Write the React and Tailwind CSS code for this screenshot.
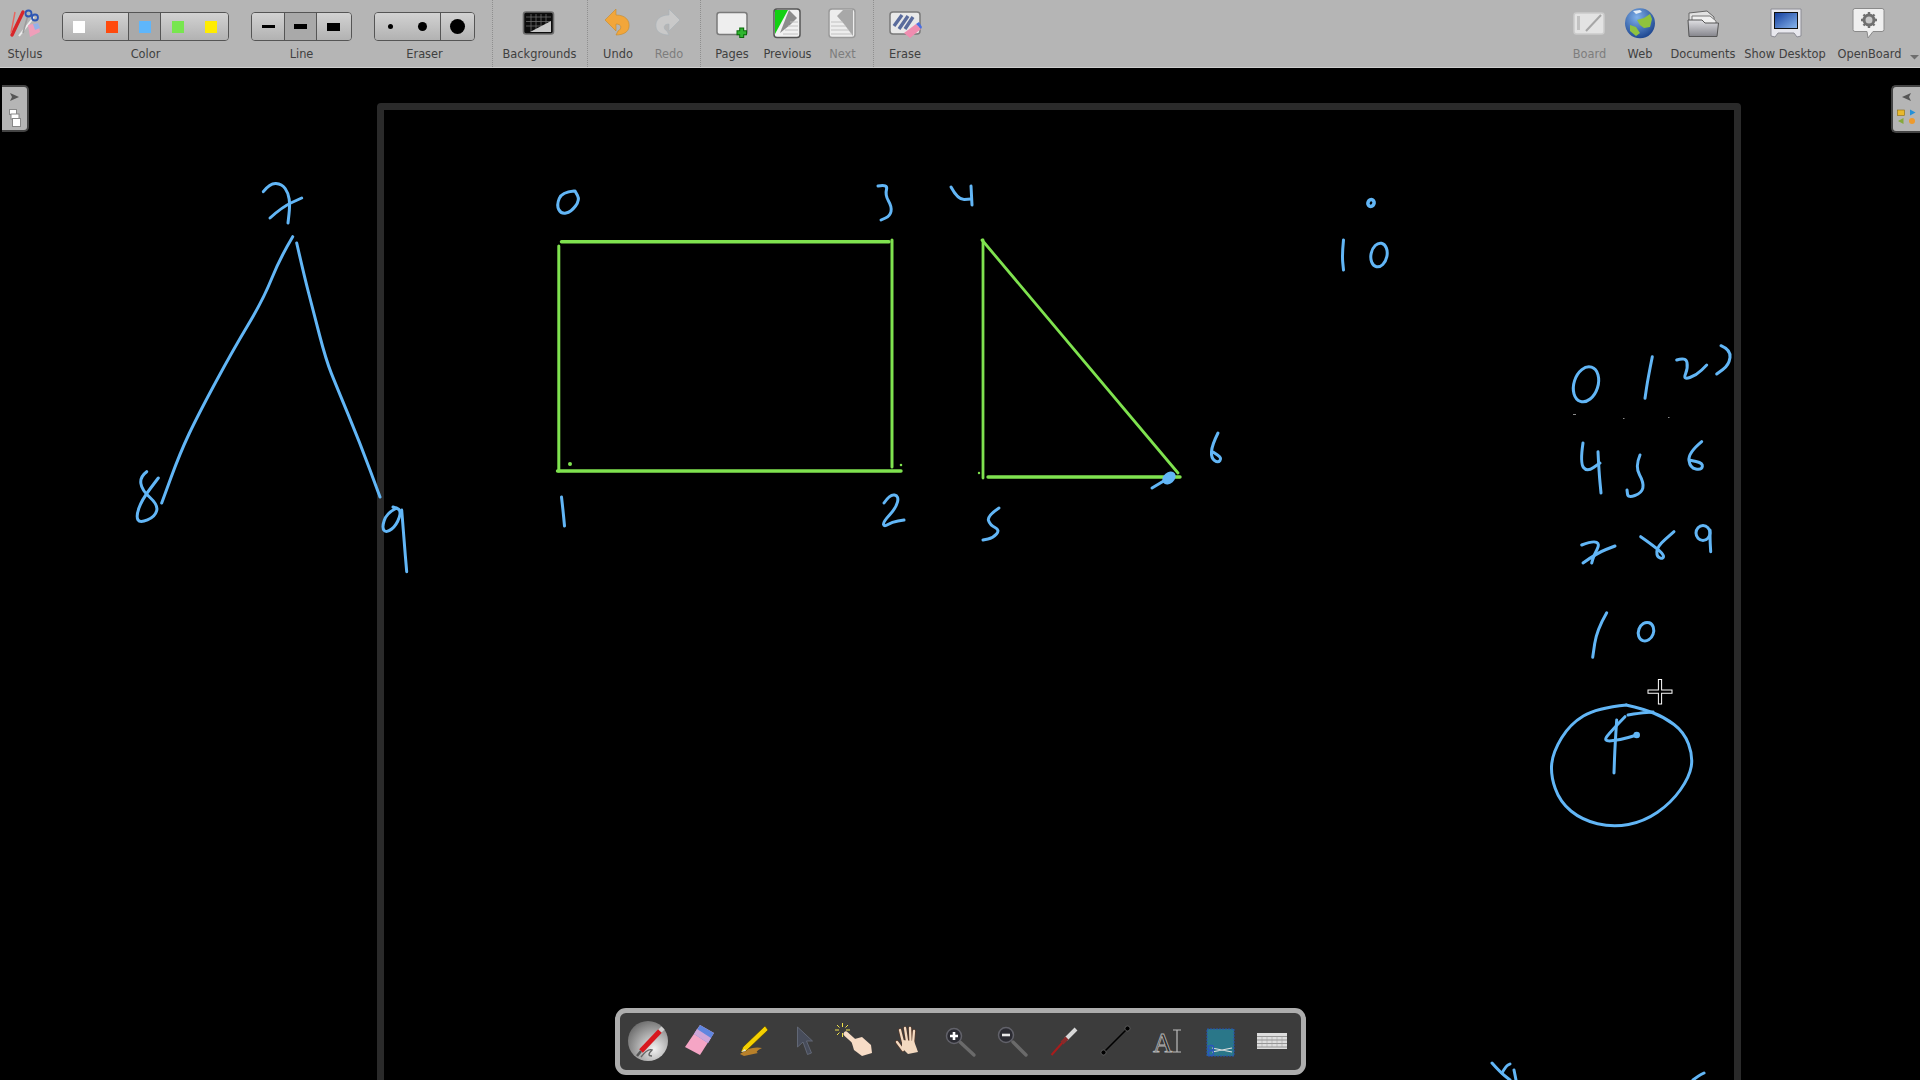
import React from "react";

// freehand ink, page coordinates
const BLUE = "#62b6f6";
const GREEN = "#7fe24f";

const smooth = (pts) => {
  let d = `M${pts[0][0]} ${pts[0][1]}`;
  for (let i = 1; i < pts.length - 1; i++) {
    const mx = (pts[i][0] + pts[i + 1][0]) / 2;
    const my = (pts[i][1] + pts[i + 1][1]) / 2;
    d += ` Q${pts[i][0]} ${pts[i][1]} ${mx} ${my}`;
  }
  const last = pts[pts.length - 1];
  return d + ` L${last[0]} ${last[1]}`;
};

const blueStrokes = [
  // left figure
  [[292.7, 236.7], [280, 258], [263, 300], [233, 350], [198, 415], [180, 453], [161.7, 503]],
  [[296.7, 243], [304, 275], [313, 310], [326, 360], [336.7, 386.7], [360, 443], [380, 497]],
  [[263.3, 191.7], [270, 183], [282, 184], [288.3, 193], [290, 205], [288, 223]],
  [[270, 218], [282, 207], [301.7, 198]],
  [[146.7, 471.7], [140, 476.7], [141.7, 490], [158.3, 505], [155, 516.7], [140, 523], [136, 516.7], [141.7, 500], [158.3, 478]],
  [[396.7, 508], [386.7, 513], [381.7, 528], [386.7, 533], [396.7, 525], [401.7, 510], [393, 507]],
  [[401.7, 510], [404, 540], [406.7, 571.7]],
  // square labels
  [[574, 191], [562, 192], [556.5, 205], [561, 214], [571, 212], [580, 200], [575, 191]],
  [[878, 186], [888, 184], [885, 195], [892, 207], [890, 216], [881, 220]],
  [[951, 187], [958, 200], [971, 199]],
  [[971, 186], [972, 205]],
  [[561.5, 497], [563, 510], [564.5, 526]],
  [[884, 503], [890, 494], [899, 496], [896, 508], [883, 522], [884, 527], [892, 522], [904, 520]],
  [[999, 508], [987, 516], [990, 525], [1000, 530], [993, 538], [983, 540]],
  [[1218, 433], [1212, 445], [1211, 458], [1218, 463], [1222, 458], [1213, 452]],
  [[1152, 488], [1162, 482], [1172, 476]],
  // top right 10
  [[1343.5, 240], [1342, 255], [1343.5, 270]],
  // right column
  [[1652.3, 356.7], [1648, 378], [1645, 398.3]],
  [[1676.7, 360], [1686, 357], [1688, 368], [1683, 380], [1696.7, 375], [1706.7, 365]],
  [[1721, 345.7], [1731, 350], [1729, 365], [1716.7, 374]],
  [[1583, 443], [1580, 463], [1587, 472], [1600, 463]],
  [[1598, 451.7], [1599, 472], [1601, 493]],
  [[1640, 455], [1635, 466.7], [1644, 483], [1641.7, 493], [1628, 498], [1627, 490]],
  [[1701.7, 441.7], [1688, 453], [1690, 468], [1701.7, 470], [1703, 463], [1689, 460]],
  [[1581.7, 545], [1593, 540.7], [1600, 544], [1594, 555], [1591.7, 563]],
  [[1583, 563], [1597, 553], [1615, 546]],
  [[1640.7, 536.7], [1655, 546.7], [1664, 555], [1663, 559], [1656.7, 556.7], [1657, 546.7], [1674, 531.7]],
  [[1710, 530], [1710, 540], [1710.7, 551.7]],
  [[1606.7, 612.7], [1596.7, 630], [1592.7, 657.3]],
  // circled 4
  [[1626.7, 705], [1596.7, 708], [1570, 724], [1553, 752], [1550.5, 775], [1560, 802], [1582, 820], [1613, 827.5], [1644, 821.5], [1671, 803], [1689.5, 777], [1693, 756], [1684, 732], [1664, 717], [1643, 709], [1626, 705]],
  [[1625, 716.7], [1612, 730], [1602.7, 741.7], [1620, 740], [1636.7, 735]],
  [[1616.7, 720], [1615, 745], [1614, 773]],
  [[1628, 715], [1640, 713], [1653, 712]],
  // clipped at the bottom
  [[1492, 1063], [1500, 1072], [1510, 1080]],
  [[1502, 1073], [1506, 1066], [1510, 1064]],
  [[1514, 1070], [1516, 1080]],
  [[1693, 1080], [1698, 1076], [1704, 1073]],
];

function Drawing() {
  return (
    <svg className="absolute inset-0 w-full h-full" viewBox="0 68 1920 1012">
      <g stroke={GREEN} fill="none" strokeLinecap="round">
        <path d="M561.5 241.7H889" strokeWidth="3.4" />
        <path d="M558.8 246V471M892 240V467" strokeWidth="3" />
        <path d="M557.5 471H901" strokeWidth="3.4" />
        <path d="M983 240V478" strokeWidth="2.8" />
        <path d="M982 240L1178 473" strokeWidth="2.8" />
        <path d="M988 477H1180" strokeWidth="3.4" />
        <circle cx="570" cy="464" r="1" strokeWidth="2" />
        <circle cx="901" cy="465" r="0.6" strokeWidth="1.4" />
        <circle cx="979" cy="473" r="0.5" strokeWidth="1.4" />
      </g>
      <g stroke={BLUE} fill="none" strokeWidth="3" strokeLinecap="round" strokeLinejoin="round">
        {blueStrokes.map((pts, i) => (
          <path key={i} d={smooth(pts)} />
        ))}
        <ellipse cx="1586" cy="384.3" rx="12" ry="18" transform="rotate(18 1586 384.3)" />
        <ellipse cx="1371" cy="203" rx="3" ry="3.5" strokeWidth="3.6" transform="rotate(25 1371 203)" />
        <ellipse cx="1379" cy="255" rx="8" ry="12" transform="rotate(12 1379 255)" />
        <ellipse cx="1703" cy="533" rx="7" ry="7.5" />
        <ellipse cx="1646" cy="631.7" rx="7.5" ry="9.5" transform="rotate(20 1646 631.7)" />
        <ellipse cx="1169" cy="478" rx="6" ry="4" fill={BLUE} transform="rotate(-40 1169 478)" />
        <circle cx="1636.7" cy="735" r="1.8" fill={BLUE} />
      </g>
      <g fill="#8a8a8a">
        <rect x="1573" y="414" width="3" height="1" />
        <rect x="1623" y="418" width="1.5" height="1" />
        <rect x="1668" y="417" width="1.5" height="1" />
      </g>
      {/* cross cursor */}
      <path d="M1660 679V704.5M1647.5 691.7H1672.5" stroke="#fff" strokeWidth="4.2" />
      <path d="M1660 680V703.5M1648.5 691.7H1671.5" stroke="#000" strokeWidth="2.2" />
    </svg>
  );
}

function Tool({ x, w, label, disabled, children }) {
  return (
    <div className="flex flex-col items-center shrink-0" style={{ width: w }}>
      <svg width={w} height="44" viewBox={`${x} 0 ${w} 44`} className="block">
        {children}
      </svg>
      <span className={`text-[11.4px] leading-[20px] whitespace-nowrap ${disabled ? "text-[#7d7d7d]" : "text-[#404040]"}`}>
        {label}
      </span>
    </div>
  );
}

function SegGroup({ label, width, children }) {
  return (
    <div className="flex flex-col items-center shrink-0" style={{ width }}>
      <div className="mt-[12px] w-full h-[29px] mb-[3px] flex border border-[#555555] rounded-[4px] overflow-hidden divide-x divide-[#555555]">
        {children}
      </div>
      <span className="text-[11.4px] leading-[20px] text-[#404040]">{label}</span>
    </div>
  );
}

function Seg({ w, active, children }) {
  return (
    <div
      className={`h-full flex items-center justify-around ${active ? "bg-[#a9a9a9]" : "bg-gradient-to-b from-[#d2d2d2] to-[#b2b2b2]"}`}
      style={{ width: w }}
    >
      {children}
    </div>
  );
}

const Swatch = ({ color }) => <div className="w-3 h-3" style={{ background: color }} />;
const Bar = ({ h }) => <div className="w-[13px] bg-black" style={{ height: h }} />;
const Dot = ({ d }) => <div className="rounded-full bg-black" style={{ width: d, height: d }} />;
const Sep = () => <div className="w-0 h-full border-l border-dotted border-[#8f8f8f] shrink-0" />;

function Toolbar() {
  return (
    <div className="h-[68px] shrink-0 flex bg-[#b5b5b5] border-b border-[#cfcfcf]">
      <Tool x={0} w={50} label="Stylus">
        <path d="M23 12L12 35" stroke="#d8262a" strokeWidth="3.4" strokeLinecap="round" />
        <path d="M15 12L11 33" stroke="#e8655f" strokeWidth="1.4" />
        <path d="M34 17L19 36" stroke="#ececec" strokeWidth="2" />
        <path d="M28 15L23 33" stroke="#9c9c9c" strokeWidth="1.6" />
        <circle cx="28.5" cy="13.5" r="3" fill="none" stroke="#2c56b4" strokeWidth="1.8" />
        <circle cx="35" cy="17.5" r="3" fill="none" stroke="#2c56b4" strokeWidth="1.8" />
        <path d="M28 25L38 23L40 32L30 37Z" fill="#ef9fba" />
        <path d="M33 24L38 23L40 28L35 30Z" fill="#94b2e8" />
      </Tool>
      <div className="w-[12px] shrink-0" />
      <SegGroup label="Color" width={167}>
        <Seg w={67}>
          <Swatch color="#ffffff" />
          <Swatch color="#ff4a0d" />
        </Seg>
        <Seg w={32} active>
          <Swatch color="#5fb6fb" />
        </Seg>
        <Seg w={68}>
          <Swatch color="#78e64f" />
          <Swatch color="#ffec00" />
        </Seg>
      </SegGroup>
      <div className="w-[22px] shrink-0" />
      <SegGroup label="Line" width={101}>
        <Seg w={34}>
          <Bar h={3} />
        </Seg>
        <Seg w={32} active>
          <Bar h={5} />
        </Seg>
        <Seg w={35}>
          <Bar h={8} />
        </Seg>
      </SegGroup>
      <div className="w-[22px] shrink-0" />
      <SegGroup label="Eraser" width={101}>
        <Seg w={67}>
          <Dot d={5} />
          <Dot d={9} />
        </Seg>
        <Seg w={34}>
          <Dot d={15} />
        </Seg>
      </SegGroup>
      <div className="w-[17px] shrink-0" />
      <Sep />
      <Tool x={493} w={93} label="Backgrounds">
        <rect x="523.5" y="12" width="30" height="22" rx="2.5" fill="#0c0c0c" stroke="#6e6e6e" strokeWidth="1.6" />
        <path d="M526 17H551M526 21.5H551M526 26H551M531 14V32M536 14V32M541 14V32M546 14V32" stroke="#6a6a6a" strokeWidth="0.8" />
        <path d="M530 32L551 21V32Z" fill="#c9c9c9" />
      </Tool>
      <div className="w-[1px] shrink-0" />
      <Sep />
      <div className="w-[5px] shrink-0" />
      <Tool x={593} w={50} label="Undo">
        <path d="M605 20L616 9V15C625 15 630 20 629 27C628.5 32 623 35 616 35L618 31C622 29 622 24 616 24V31Z" fill="#f2a63a" stroke="#c58a2c" strokeWidth="0.6" />
      </Tool>
      <Tool x={643} w={52} label="Redo" disabled>
        <path d="M680 20L669 9V15C660 15 655 20 656 27C656.5 32 662 35 669 35L667 31C663 29 663 24 669 24V31Z" fill="#c9c9c9" stroke="#a7b1b8" strokeWidth="0.6" />
      </Tool>
      <div className="w-[5px] shrink-0" />
      <Sep />
      <div className="w-[4px] shrink-0" />
      <Tool x={705} w={54} label="Pages">
        <rect x="717" y="12.5" width="30" height="22" rx="2.5" fill="#eeeeee" stroke="#7a7a7a" strokeWidth="1.5" />
        <path d="M741.7 27.5V38M736.5 32.7H747" stroke="#0a6a0a" strokeWidth="5" />
        <path d="M741.7 28.5V37M737.5 32.7H746" stroke="#2fb52f" strokeWidth="3" />
      </Tool>
      <Tool x={759} w={57} label="Previous">
        <rect x="774" y="9" width="26" height="28.5" rx="3" fill="#f1f1f1" stroke="#555555" strokeWidth="1.5" />
        <path d="M775 10H788L775 34Z" fill="#12d012" />
        <path d="M789 10L797 18L790 25L780 33Z" fill="#8c8c8c" />
        <path d="M790 22H798M788 26H798M785 30H798M783 34H798" stroke="#bdbdbd" strokeWidth="0.9" />
      </Tool>
      <Tool x={816} w={53} label="Next" disabled>
        <rect x="829" y="9" width="26" height="28.5" rx="3" fill="#ededed" stroke="#9a9a9a" strokeWidth="1.5" />
        <path d="M843 10L837 16L844 24L853 36V10Z" fill="#a8a8a8" />
        <path d="M831 22H843M831 26H846M831 30H849M831 34H852" stroke="#bcbcbc" strokeWidth="0.9" />
      </Tool>
      <div className="w-[4px] shrink-0" />
      <Sep />
      <div className="w-[3px] shrink-0" />
      <Tool x={877} w={56} label="Erase">
        <rect x="890" y="12" width="30" height="22" rx="3" fill="#e9e9e9" stroke="#7a7a7a" strokeWidth="1.5" />
        <path d="M894 26L902 15M899 29L908 16M905 29L913 17" stroke="#5a6b9c" strokeWidth="3.4" />
        <path d="M904 33L916 24L921 29L910 38Z" fill="#ef8db0" />
        <path d="M916 24L919 22L922 27L921 29Z" fill="#4a6ee0" />
      </Tool>
      <div className="flex-1" />
      <Tool x={1564} w={51} label="Board" disabled>
        <rect x="1574" y="13" width="30" height="21" rx="2.5" fill="#e3e3e3" stroke="#cccccc" strokeWidth="1.5" />
        <rect x="1577" y="16" width="3" height="14" fill="#c2c2c2" />
        <path d="M1601 15L1586 31" stroke="#a6a6a6" strokeWidth="2" />
      </Tool>
      <Tool x={1615} w={50} label="Web">
        <defs>
          <radialGradient id="globe" cx="0.4" cy="0.3" r="0.8">
            <stop offset="0" stopColor="#7fb0ea" />
            <stop offset="1" stopColor="#123a86" />
          </radialGradient>
        </defs>
        <circle cx="1640" cy="23.3" r="15" fill="url(#globe)" />
        <path d="M1637 20L1644 18L1650 14L1652 19L1650 27L1644 28L1640 25ZM1630 25L1636 27L1640 33L1636 36L1630 31Z" fill="#8fc23e" />
        <path d="M1633 11L1640 10L1642 12L1636 14Z" fill="#e4eef8" />
      </Tool>
      <Tool x={1665} w={76} label="Documents">
        <defs>
          <linearGradient id="folder" x1="0" y1="0" x2="0" y2="1">
            <stop offset="0" stopColor="#e0e0e4" />
            <stop offset="1" stopColor="#85858c" />
          </linearGradient>
        </defs>
        <path d="M1689 13L1707 11L1714 17V28H1689Z" fill="#e2e2e2" stroke="#666666" strokeWidth="1" />
        <path d="M1692 16H1710L1716 21V28H1692Z" fill="#f0f0f0" stroke="#777777" strokeWidth="1" />
        <path d="M1688 20H1702L1705 23H1718.5L1717 36.5H1689Z" fill="url(#folder)" stroke="#555555" strokeWidth="1" />
      </Tool>
      <Tool x={1741} w={88} label="Show Desktop">
        <path d="M1771 9H1801V36L1797 37L1794 33H1778L1775 37L1771 36Z" fill="#e8e8ee" stroke="#8c8c94" strokeWidth="1" />
        <defs>
          <linearGradient id="screen" x1="0" y1="0" x2="1" y2="1">
            <stop offset="0" stopColor="#123c9c" />
            <stop offset="1" stopColor="#8bb8ee" />
          </linearGradient>
        </defs>
        <rect x="1774.5" y="12.5" width="23" height="16" fill="url(#screen)" stroke="#111111" strokeWidth="1" />
      </Tool>
      <Tool x={1829} w={81} label="OpenBoard">
        <path d="M1855 8.5H1882Q1884 8.5 1884 10.5V29.5Q1884 31.5 1882 31.5H1873L1868 38L1867 31.5H1855Q1853 31.5 1853 29.5V10.5Q1853 8.5 1855 8.5Z" fill="#efefef" stroke="#8a8a8a" strokeWidth="1" />
        <circle cx="1869" cy="20" r="5" fill="#c8c8c8" stroke="#6f6f6f" strokeWidth="3" />
        <path d="M1869 12V15M1869 25V28M1861 20H1864M1874 20H1877M1863.5 14.5L1865.5 16.5M1872.5 23.5L1874.5 25.5M1863.5 25.5L1865.5 23.5M1872.5 16.5L1874.5 14.5" stroke="#6f6f6f" strokeWidth="2.4" />
      </Tool>
      <div className="w-[10px] shrink-0 flex items-end justify-start pb-[7px]">
        <svg width="10" height="5" viewBox="0 0 10 5">
          <path d="M0 0H9L4.5 4.5Z" fill="#6e6e6e" />
        </svg>
      </div>
    </div>
  );
}

function PalIcon({ cx, children }) {
  return (
    <svg width="52" height="57" viewBox={`${cx - 26} 1013 52 57`} className="block shrink-0">
      {children}
    </svg>
  );
}

function Palette() {
  return (
    <div className="absolute left-[615px] bottom-[5px] w-[691px] h-[67px] flex items-center pl-[2px] bg-[#3c3c3c] border-[5px] border-[#adadad] rounded-[11px]">
      <PalIcon cx={648}>
        <defs>
          <radialGradient id="disc" cx="0.65" cy="0.7" r="0.75">
            <stop offset="0" stopColor="#f2f2f2" />
            <stop offset="1" stopColor="#6e6e6e" />
          </radialGradient>
        </defs>
        <circle cx="648" cy="1041" r="20" fill="url(#disc)" />
        <path d="M660 1031L641 1051" stroke="#d8181e" strokeWidth="5" />
        <path d="M660 1031L663 1028" stroke="#d0d0d0" strokeWidth="4.5" />
        <path d="M641 1051L637 1056" stroke="#555555" strokeWidth="2.5" />
        <path d="M641 1057Q648 1048 652 1050Q646 1056 652 1056" stroke="#666666" strokeWidth="1.4" fill="none" />
      </PalIcon>
      <PalIcon cx={700}>
        <path d="M685 1047L700 1025L714 1033L700 1055Z" fill="#f5a5c5" />
        <path d="M694 1034L700 1025L714 1033L708 1043Z" fill="#5f86df" />
        <path d="M694 1034L708 1043L711 1038L697 1029Z" fill="#cfa6d8" />
      </PalIcon>
      <PalIcon cx={752}>
        <path d="M740 1054Q750 1046 762 1048Q754 1052 758 1053L744 1056Z" fill="#b8802a" />
        <path d="M765 1026L768 1030L746 1051L741 1052L743 1047Z" fill="#f4d000" stroke="#4a3a00" strokeWidth="0.6" />
        <path d="M741 1052L745 1049L746 1051Z" fill="#e8e8e8" />
      </PalIcon>
      <PalIcon cx={804}>
        <path d="M797.5 1027V1047L803 1042L807.5 1054.5L811.5 1053L806.5 1041H812.5Z" fill="#474c5a" stroke="#6a7080" strokeWidth="0.8" />
      </PalIcon>
      <PalIcon cx={856}>
        <path d="M842.5 1023V1027M842.5 1033V1037M835 1030H839M846 1030H850M837 1025L839.5 1027.5M848 1025L845.5 1027.5M837 1035L839.5 1032.5" stroke="#f1e24a" strokeWidth="1" />
        <path d="M846 1034L856 1043" stroke="#f7dcc6" strokeWidth="5" strokeLinecap="round" />
        <path d="M851 1040L862 1037L871 1045L872 1053L862 1056L854 1050Z" fill="#f7dcc6" />
      </PalIcon>
      <PalIcon cx={908}>
        <g stroke="#5a3a2a" strokeWidth="3.6" strokeLinecap="round" fill="none">
          <path d="M900 1030L903 1042M905 1028L907 1041M910 1028L910.5 1041M914 1031L913 1043M897 1042L903 1050" />
        </g>
        <g stroke="#f3d9c0" strokeWidth="2.3" strokeLinecap="round" fill="none">
          <path d="M900 1030L903 1042M905 1028L907 1041M910 1028L910.5 1041M914 1031L913 1043M897 1042L903 1050" />
        </g>
        <path d="M902 1040L914 1041L918 1052L908 1054L902 1048Z" fill="#f3d9c0" />
      </PalIcon>
      <PalIcon cx={960}>
        <path d="M960 1042L974 1055" stroke="#6a6a6a" strokeWidth="3.4" strokeLinecap="round" />
        <circle cx="954" cy="1036" r="7.5" fill="#2b2b32" stroke="#62626a" strokeWidth="1.5" />
        <path d="M950 1036H958M954 1032V1040" stroke="#fff" strokeWidth="2.6" />
      </PalIcon>
      <PalIcon cx={1012}>
        <path d="M1013 1042L1026 1055" stroke="#6a6a6a" strokeWidth="3.4" strokeLinecap="round" />
        <circle cx="1006" cy="1035" r="7.5" fill="#2b2b32" stroke="#62626a" strokeWidth="1.5" />
        <path d="M1002 1035H1010" stroke="#e8e8e8" strokeWidth="2.6" />
      </PalIcon>
      <PalIcon cx={1064}>
        <path d="M1063 1042L1051.5 1055" stroke="#a81c1c" strokeWidth="2" />
        <path d="M1076 1029L1066 1039" stroke="#d8d8d8" strokeWidth="4" />
        <path d="M1067 1038L1062 1043" stroke="#8a2a2a" strokeWidth="4" />
      </PalIcon>
      <PalIcon cx={1116}>
        <path d="M1103.5 1052.5L1127.5 1028.5" stroke="#000" strokeWidth="1.6" />
        <circle cx="1103.5" cy="1052.5" r="2.5" fill="#000" stroke="#777" strokeWidth="0.6" />
        <circle cx="1127.5" cy="1028.5" r="2.5" fill="#000" stroke="#777" strokeWidth="0.6" />
      </PalIcon>
      <PalIcon cx={1168}>
        <text x="1153" y="1052" fontFamily="Liberation Serif, serif" fontSize="27" fill="#2a2a2a" stroke="#b4b4b4" strokeWidth="0.8">
          A
        </text>
        <path d="M1173 1030H1181M1177 1030V1052M1173 1052H1181" stroke="#bdbdbd" strokeWidth="1.2" fill="none" />
      </PalIcon>
      <PalIcon cx={1220}>
        <rect x="1207" y="1029" width="27" height="27" fill="#2a7789" stroke="#2450b0" strokeWidth="1" strokeDasharray="2 1" />
        <path d="M1232 1048L1212 1052M1232 1052L1212 1048" stroke="#e0e0e0" strokeWidth="1.2" />
        <circle cx="1211" cy="1048" r="2.6" fill="none" stroke="#2a54c0" strokeWidth="1.2" />
        <circle cx="1211" cy="1053" r="2.6" fill="none" stroke="#2a54c0" strokeWidth="1.2" />
      </PalIcon>
      <PalIcon cx={1272}>
        <rect x="1257" y="1033" width="30" height="16" fill="#dedede" />
        <path d="M1257 1036.5H1287M1257 1040H1287M1257 1043.5H1287M1257 1047H1287" stroke="#777777" strokeWidth="0.7" />
        <path d="M1262 1036V1047M1267 1036V1047M1272 1036V1047M1277 1036V1047M1282 1036V1047" stroke="#9a9a9a" strokeWidth="0.5" />
      </PalIcon>
    </div>
  );
}

function SideTabs() {
  return (
    <>
      <div className="absolute left-[2px] top-[17px] w-[27px] h-[47px] bg-[#b5b5b5] border-2 border-l-0 border-[#444444] rounded-r-[5px] flex flex-col items-center pt-[6px] gap-[8px]">
        <svg width="9" height="8" viewBox="0 0 9 8">
          <path d="M0 0L9 4L0 8L2 4Z" fill="#555555" />
        </svg>
        <svg width="12" height="18" viewBox="0 0 12 18">
          <rect x="0.5" y="0.5" width="7" height="5" fill="#fff" stroke="#888" />
          <rect x="2" y="5" width="8" height="5" fill="#fff" stroke="#888" />
          <rect x="3.5" y="9.5" width="8" height="8" fill="#fff" stroke="#888" />
        </svg>
      </div>
      <div className="absolute right-0 top-[17px] w-[29px] h-[48px] bg-[#b5b5b5] border-2 border-r-0 border-[#444444] rounded-l-[5px] flex flex-col items-center pt-[6px] gap-[8px]">
        <svg width="9" height="8" viewBox="0 0 9 8">
          <path d="M9 0L0 4L9 8L7 4Z" fill="#555555" />
        </svg>
        <svg width="19" height="16" viewBox="0 0 19 16">
          <rect x="0.5" y="1" width="7" height="5.5" fill="#e8b82c" stroke="#8a6a10" strokeWidth="0.6" />
          <path d="M13 0.5L18.5 3.5L13 6.5Z" fill="#2490d8" />
          <path d="M6.5 9V15L1 12Z" fill="#86a83a" />
          <circle cx="15" cy="12" r="3" fill="#ee9a2c" />
        </svg>
      </div>
    </>
  );
}

export default function App() {
  return (
    <div className="w-[1920px] h-[1080px] flex flex-col overflow-hidden bg-black font-['DejaVu_Sans',sans-serif]">
      <Toolbar />
      <div className="relative flex-1 bg-black overflow-hidden">
        {/* board frame runs off the bottom of the window */}
        <div className="ml-[377px] mt-[35px] w-[1364px] h-[1100px] border-[7px] border-[#2a2a2a] rounded-[4px]" />
        <Drawing />
        <SideTabs />
        <Palette />
      </div>
    </div>
  );
}
